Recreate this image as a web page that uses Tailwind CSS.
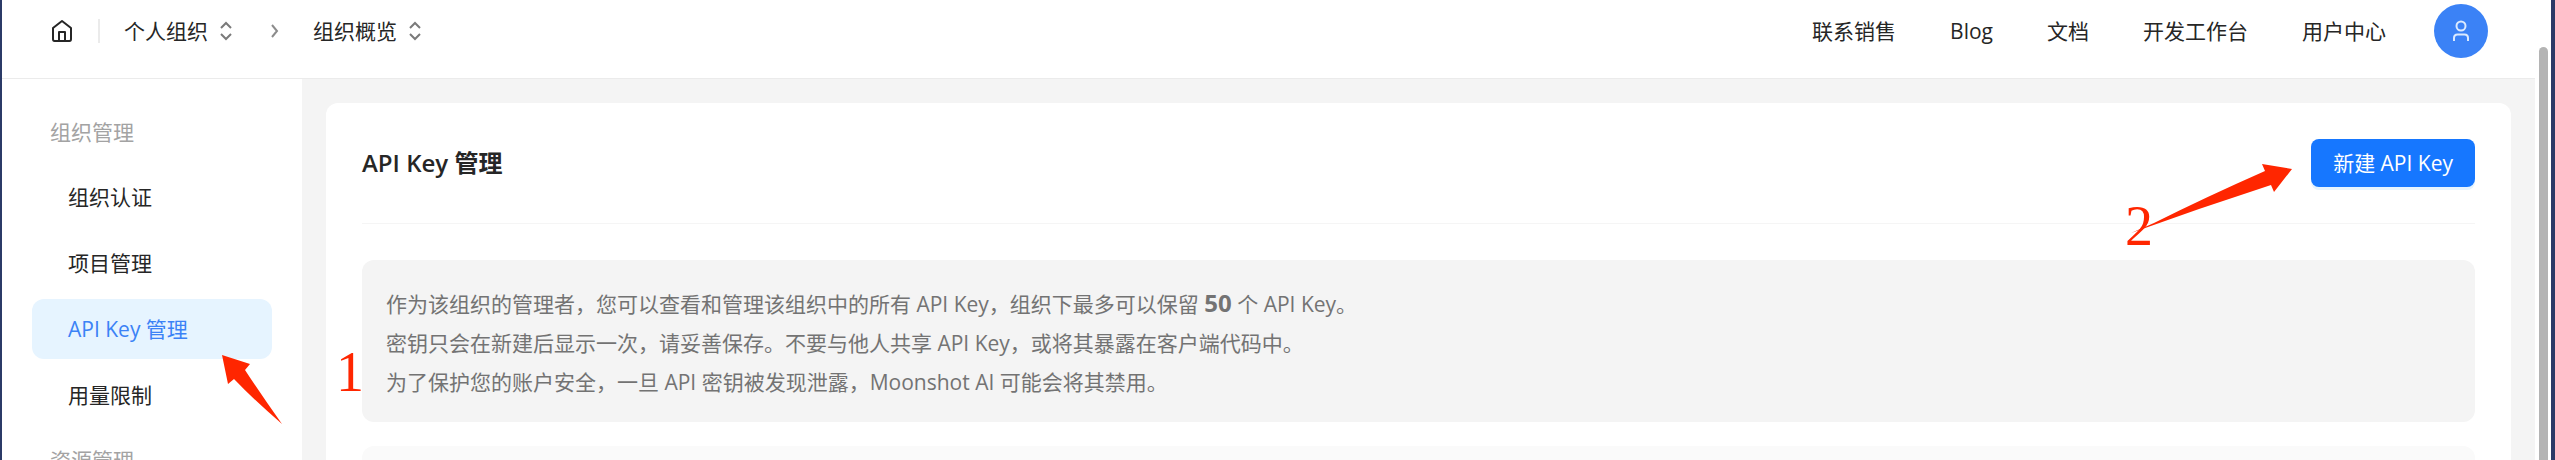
<!DOCTYPE html>
<html lang="zh-CN">
<head>
  <meta charset="UTF-8" />
  <meta name="viewport" content="width=device-width,initial-scale=1" />
  <title>API Key 管理</title>
  <script src="https://cdn.jsdelivr.net/npm/@tailwindcss/browser@4"></script>
</head>
<body class="h-screen overflow-hidden bg-white font-['Open_Sans','Noto_Sans_CJK_SC',sans-serif] text-[21px] leading-[39px] text-[#262626]">
  <div class="relative flex h-full border-l-2 border-r-4 border-[#2b3a67]">
    <div class="flex min-w-0 flex-1 flex-col">

      <!-- Top bar -->
      <header class="flex h-[79px] shrink-0 items-start justify-between border-b border-[#ebebeb] pr-[47px] pl-12">
        <nav class="flex h-[62px] items-center" aria-label="面包屑">
          <a href="#" aria-label="首页">
            <svg class="size-6" viewBox="0 0 24 24" fill="none" stroke="#262626" stroke-width="2" stroke-linejoin="round" aria-hidden="true">
              <path d="M3 9 L12 2 L21 9 V20 Q21 22 19.5 22 H4.5 Q3 22 3 20 Z"/>
              <path d="M9 22 V13 H15 V22"/>
            </svg>
          </a>
          <span class="ml-6 h-6 w-[2px] bg-[#ebebeb]"></span>
          <button class="ml-6 flex items-center gap-3">个人组织
            <svg class="h-5 w-3" viewBox="0 0 12 20" fill="none" stroke="#7a7a7a" stroke-width="2" aria-hidden="true"><path d="M1 7 L6 2 L11 7 M1 13 L6 18 L11 13"/></svg>
          </button>
          <svg class="mr-[34px] ml-[39px] h-4 w-2" viewBox="0 0 8 16" fill="none" stroke="#8c8c8c" stroke-width="2" aria-hidden="true"><path d="M1 2 L6 8 L1 14"/></svg>
          <button class="flex items-center gap-3">组织概览
            <svg class="h-5 w-3" viewBox="0 0 12 20" fill="none" stroke="#7a7a7a" stroke-width="2" aria-hidden="true"><path d="M1 7 L6 2 L11 7 M1 13 L6 18 L11 13"/></svg>
          </button>
        </nav>
        <div class="flex h-[62px] items-center gap-12">
          <nav class="flex items-center gap-[54px]">
            <a href="#">联系销售</a>
            <a href="#" class="font-medium">Blog</a>
            <a href="#">文档</a>
            <a href="#">开发工作台</a>
            <a href="#">用户中心</a>
          </nav>
          <button class="flex size-[54px] items-center justify-center rounded-full bg-[#3b82f6]" aria-label="账户">
            <svg class="h-6 w-5" viewBox="0 0 20 24" fill="none" stroke="#dbeafe" stroke-width="2" aria-hidden="true"><circle cx="10" cy="7" r="4.5"/><path d="M3 22 V19 Q3 15.5 6.500 15.500 H13.5 Q17 15.500 17 19 V22"/></svg>
          </button>
        </div>
      </header>

      <div class="flex min-h-0 flex-1">
        <!-- Sidebar -->
        <aside class="flex w-[300px] shrink-0 flex-col overflow-hidden px-[30px] pt-6">
          <h2 class="flex h-[58px] shrink-0 items-center pl-[18px] text-[#a3a3a3]">组织管理</h2>
          <nav class="flex shrink-0 flex-col gap-[6px] py-[6px]">
            <a href="#" class="flex h-15 items-center rounded-xl pl-9">组织认证</a>
            <a href="#" class="flex h-15 items-center rounded-xl pl-9">项目管理</a>
            <a href="#" class="flex h-15 items-center rounded-xl bg-[#e6f4ff] pl-9 text-[#3b82f6]">API Key 管理</a>
            <a href="#" class="flex h-15 items-center rounded-xl pl-9">用量限制</a>
          </nav>
          <h2 class="flex h-[58px] shrink-0 items-center pl-[18px] text-[#a3a3a3]">资源管理</h2>
        </aside>

        <!-- Content -->
        <main class="min-w-0 flex-1 overflow-hidden bg-[#f4f4f4] px-6 pt-6">
          <section class="rounded-xl bg-white p-9">
            <div class="flex items-start justify-between border-b border-[#f5f5f5] pb-9">
              <h1 class="flex h-12 items-center text-2xl font-semibold">API Key 管理</h1>
              <button class="h-12 rounded-lg bg-[#1677ff] px-[22px] text-white shadow-[0_3px_0_#e6f4ff]">新建 API Key</button>
            </div>
            <div class="mt-9 rounded-xl bg-[#f4f4f4] px-6 pt-[25px] pb-5 text-[#737373]">
              <p>作为该组织的管理者，您可以查看和管理该组织中的所有 API Key，组织下最多可以保留 <strong class="text-2xl leading-none">50</strong> 个 API Key。</p>
              <p>密钥只会在新建后显示一次，请妥善保存。不要与他人共享 API Key，或将其暴露在客户端代码中。</p>
              <p>为了保护您的账户安全，一旦 API 密钥被发现泄露，Moonshot AI 可能会将其禁用。</p>
            </div>
            <div class="mt-6 h-20 rounded-xl bg-[#fafafa]"></div>
          </section>
        </main>
      </div>
    </div>

    <!-- Scrollbar -->
    <div class="flex w-4 shrink-0 justify-center bg-white pt-[47px]">
      <div class="w-[9px] rounded-t-full bg-[#b4b4b4]"></div>
    </div>

    <!-- Step markers -->
    <svg class="pointer-events-none absolute top-[355px] left-[220px] h-[70px] w-[62px]" viewBox="222 355 62 70" fill="#ff2600" aria-hidden="true">
      <path d="M222 355 L250 364 L245 370 Q262 396 282 424 Q254 400 234 379 L228 384 Z"/>
    </svg>
    <span class="absolute top-[344px] left-[334px] font-['Liberation_Serif',serif] text-[56px] leading-[56px] text-[#ff2600]">1</span>
    <svg class="pointer-events-none absolute top-[160px] right-[258px] h-[74px] w-[162px]" viewBox="2131 160 162 74" fill="#ff2600" aria-hidden="true">
      <path d="M2292 169 L2262 164 L2265 171 Q2206 197 2154 223 L2131 233 Q2200 208 2271 185 L2274 192 Z"/>
    </svg>
    <span class="absolute top-[198px] right-[398px] font-['Liberation_Serif',serif] text-[56px] leading-[56px] text-[#ff2600]">2</span>
  </div>
</body>
</html>
